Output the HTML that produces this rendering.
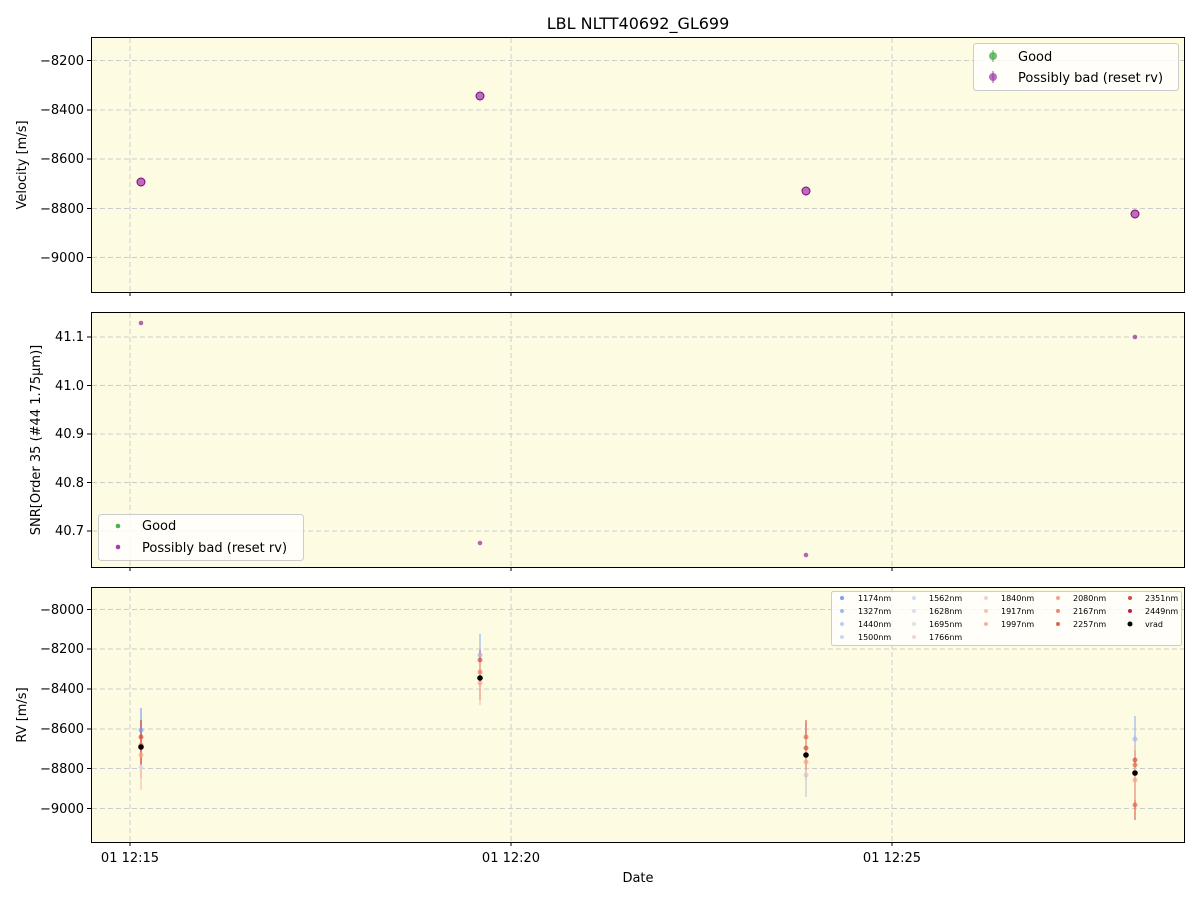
<!DOCTYPE html>
<html><head><style>body{margin:0;background:#fff}svg{display:block}text{font-family:"DejaVu Sans","Liberation Sans",sans-serif;fill:#000}</style></head><body>
<svg width="1200" height="900" xmlns="http://www.w3.org/2000/svg">
<text x="638" y="29" font-size="16" text-anchor="middle">LBL NLTT40692_GL699</text>
<g fill="#fdfbe2" stroke="#000" stroke-width="1">
<rect x="91.5" y="37.5" width="1093" height="255"/>
<rect x="91.5" y="312.5" width="1093" height="255"/>
<rect x="91.5" y="587.5" width="1093" height="255"/>
</g>
<g stroke="#ccc" stroke-dasharray="5,3" stroke-width="1">
<path d="M130 38V292M511 38V292M892 38V292M130 313V567M511 313V567M892 313V567M130 588V842M511 588V842M892 588V842"/>
<path d="M92 60.5H1184M92 110H1184M92 159H1184M92 208.5H1184M92 257.5H1184"/>
<path d="M92 337H1184M92 385.5H1184M92 434H1184M92 482.5H1184M92 531H1184"/>
<path d="M92 609.5H1184M92 649H1184M92 689H1184M92 729H1184M92 768.5H1184M92 808.5H1184"/>
</g>
<g stroke="#000"><path d="M130 292v4M511 292v4M892 292v4M130 567v4M511 567v4M892 567v4M130 842v4M511 842v4"/>
<path d="M892 842v4M91 60.5h-4M91 110h-4M91 159h-4M91 208.5h-4M91 257.5h-4M91 337h-4M91 385.5h-4M91 434h-4M91 482.5h-4M91 531h-4M91 609.5h-4M91 649h-4M91 689h-4M91 729h-4M91 768.5h-4M91 808.5h-4"/></g>
<g font-size="13" text-anchor="end">
<text x="84" y="65">−8200</text><text x="84" y="114">−8400</text><text x="84" y="163">−8600</text><text x="84" y="213">−8800</text><text x="84" y="262">−9000</text>
<text x="84" y="341">41.1</text><text x="84" y="390">41.0</text><text x="84" y="438">40.9</text><text x="84" y="487">40.8</text><text x="84" y="535">40.7</text>
<text x="84" y="614">−8000</text><text x="84" y="653">−8200</text><text x="84" y="693">−8400</text><text x="84" y="733">−8600</text><text x="84" y="773">−8800</text><text x="84" y="813">−9000</text>
</g>
<g font-size="13" text-anchor="middle"><text x="130" y="862">01 12:15</text><text x="511" y="862">01 12:20</text><text x="892" y="862">01 12:25</text><text x="638" y="882">Date</text></g>
<g font-size="13" text-anchor="middle">
<text transform="translate(26,165) rotate(-90)">Velocity [m/s]</text>
<text transform="translate(40,440) rotate(-90)">SNR[Order 35 (#44 1.75μm)]</text>
<text transform="translate(26,715) rotate(-90)">RV [m/s]</text>
</g>
<g fill="#a040a8" fill-opacity="0.75" stroke="#800080" stroke-width="1">
<circle cx="141" cy="182" r="4"/><circle cx="480" cy="96" r="4"/><circle cx="806" cy="191" r="4"/><circle cx="1135" cy="214" r="4"/>
</g>
<g fill="#a040a8" fill-opacity="0.8"><circle cx="141" cy="323" r="2.3"/><circle cx="480" cy="543" r="2.3"/><circle cx="806" cy="555" r="2.3"/><circle cx="1135" cy="337" r="2.3"/></g>
<rect x="973.5" y="43.5" width="205" height="47" rx="3" fill="#fff" fill-opacity="0.8" stroke="#ccc"/>
<circle cx="993" cy="56" r="4" fill="#4caf50" fill-opacity="0.8"/><path d="M993 50v12" stroke="#4caf50"/>
<circle cx="993" cy="77" r="4" fill="#a040a8" fill-opacity="0.75"/><path d="M993 71v12" stroke="#a040a8"/>
<text x="1018" y="61" font-size="13">Good</text><text x="1018" y="82" font-size="13">Possibly bad (reset rv)</text>
<rect x="98.5" y="514.5" width="205" height="46" rx="3" fill="#fff" fill-opacity="0.8" stroke="#ccc"/>
<circle cx="118" cy="526" r="2.3" fill="#4caf50"/><circle cx="118" cy="547" r="2.3" fill="#a040a8"/>
<text x="142" y="530" font-size="13">Good</text><text x="142" y="552" font-size="13">Possibly bad (reset rv)</text>
<!-- RV panel points -->
<g stroke-width="2" stroke-opacity="0.6">
<path d="M141 708V738" stroke="#7b9ff5"/><path d="M141 735V778" stroke="#f4a68a"/><path d="M141 740V790" stroke="#f5c4ac"/><path d="M141 720V765" stroke="#d94b3d"/>
<path d="M480 634V680" stroke="#9bb8f4"/><path d="M480 650V700" stroke="#e87a60"/><path d="M480 660V705" stroke="#f5c4ac"/>
<path d="M806 722V797" stroke="#c8c8d8"/><path d="M806 720V770" stroke="#e06650"/><path d="M806 735V780" stroke="#f5c4ac"/>
<path d="M1135 716V760" stroke="#9bb8f4"/><path d="M1135 750V820" stroke="#e06650"/><path d="M1135 740V800" stroke="#f5c4ac"/>
</g>
<g fill-opacity="0.7">
<circle cx="141" cy="730" r="2.5" fill="#7b9ff5"/><circle cx="141" cy="737" r="2.5" fill="#d94b3d"/><circle cx="141" cy="745" r="2.5" fill="#e87a60"/><circle cx="141" cy="755" r="2.5" fill="#f4a68a"/><circle cx="141" cy="767" r="2.5" fill="#d0dcf0"/>
<circle cx="480" cy="655" r="2.5" fill="#9bb8f4"/><circle cx="480" cy="660" r="2.5" fill="#d94b3d"/><circle cx="480" cy="672" r="2.5" fill="#e87a60"/><circle cx="480" cy="683" r="2.5" fill="#f4a68a"/>
<circle cx="806" cy="737" r="2.5" fill="#e06650"/><circle cx="806" cy="748" r="2.5" fill="#d94b3d"/><circle cx="806" cy="762" r="2.5" fill="#f4a68a"/><circle cx="806" cy="775" r="2.5" fill="#c8c8d8"/>
<circle cx="1135" cy="739" r="2.5" fill="#9bb8f4"/><circle cx="1135" cy="760" r="2.5" fill="#d94b3d"/><circle cx="1135" cy="765" r="2.5" fill="#e06650"/><circle cx="1135" cy="780" r="2.5" fill="#f4a68a"/><circle cx="1135" cy="805" r="2.5" fill="#e06650"/>
</g>
<g fill="#000"><circle cx="141" cy="747" r="2.8"/><circle cx="480" cy="678" r="2.8"/><circle cx="806" cy="755" r="2.8"/><circle cx="1135" cy="773" r="2.8"/></g>
<rect x="831.5" y="591.5" width="350" height="54" rx="2" fill="#fff" fill-opacity="0.8" stroke="#ccc"/>
<g font-size="8">
<text x="858" y="601">1174nm</text><text x="858" y="614">1327nm</text><text x="858" y="627">1440nm</text><text x="858" y="640">1500nm</text>
<text x="929" y="601">1562nm</text><text x="929" y="614">1628nm</text><text x="929" y="627">1695nm</text><text x="929" y="640">1766nm</text>
<text x="1001" y="601">1840nm</text><text x="1001" y="614">1917nm</text><text x="1001" y="627">1997nm</text>
<text x="1073" y="601">2080nm</text><text x="1073" y="614">2167nm</text><text x="1073" y="627">2257nm</text>
<text x="1145" y="601">2351nm</text><text x="1145" y="614">2449nm</text><text x="1145" y="627">vrad</text>
</g>
<g>
<circle cx="842" cy="598" r="2" fill="#7b9ff5"/><circle cx="842" cy="611" r="2" fill="#9bb8f4"/><circle cx="842" cy="624" r="2" fill="#b8cdf6"/><circle cx="842" cy="637" r="2" fill="#c8d8f6"/>
<circle cx="914" cy="598" r="2" fill="#cddcf4"/><circle cx="914" cy="611" r="2" fill="#dcdff0"/><circle cx="914" cy="624" r="2" fill="#e0e0e0"/><circle cx="914" cy="637" r="2" fill="#ecd8d0"/>
<circle cx="986" cy="598" r="2" fill="#f5d0c0"/><circle cx="986" cy="611" r="2" fill="#f5c4ac"/><circle cx="986" cy="624" r="2" fill="#f4b59c"/>
<circle cx="1058" cy="598" r="2" fill="#f4a68a"/><circle cx="1058" cy="611" r="2" fill="#ec8a70"/><circle cx="1058" cy="624" r="2" fill="#e06650"/>
<circle cx="1130" cy="598" r="2" fill="#d94b3d"/><circle cx="1130" cy="611" r="2" fill="#c02040"/><circle cx="1130" cy="624" r="2.5" fill="#000"/>
</g>
</svg>
</body></html>
